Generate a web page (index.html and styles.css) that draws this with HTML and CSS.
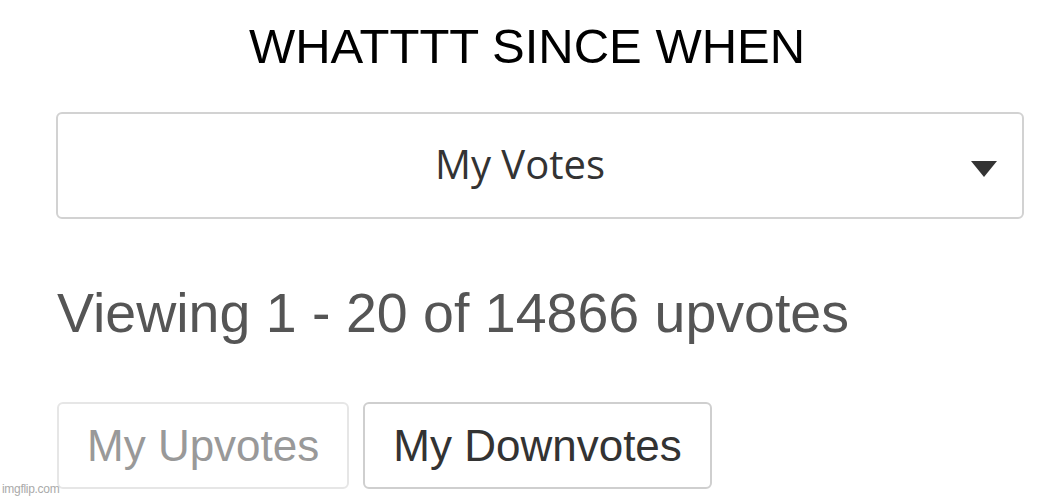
FILE: index.html
```html
<!DOCTYPE html>
<html>
<head>
<meta charset="utf-8">
<link rel="stylesheet" href="styles.css">
</head>
<body>
<div class="page">
  <h1 class="title">WHATTTT SINCE WHEN</h1>
  <div class="select">
    <span class="select-label">My Votes</span>
    <svg class="caret" width="26" height="16" viewBox="0 0 26 16"><polygon points="0,0 26,0 13,16" fill="#333"/></svg>
  </div>
  <p class="viewing">Viewing 1 - 20 of 14866 upvotes</p>
  <div class="tabs">
    <button class="tab tab-disabled">My Upvotes</button>
    <button class="tab">My Downvotes</button>
  </div>
  <span class="watermark">imgflip.com</span>
</div>
</body>
</html>
```

FILE: styles.css
```css
html, body {
  margin: 0;
  padding: 0;
  background: #fff;
}
.page {
  position: relative;
  width: 1054px;
  height: 499px;
  box-sizing: border-box;
  padding: 18px 30px 0 56px;
  display: flex;
  flex-direction: column;
  font-family: "Liberation Sans", Arial, sans-serif;
  overflow: hidden;
}
.title {
  margin: 0 0 0 -56px;
  width: 1054px;
  text-align: center;
  font-weight: normal;
  font-size: 49px;
  line-height: 56px;
  color: #000;
}
.select {
  margin-top: 38px;
  height: 107px;
  box-sizing: border-box;
  border: 2px solid #d2d2d2;
  border-radius: 6px;
  display: flex;
  align-items: center;
  justify-content: center;
  position: relative;
}
.select-label {
  font-family: "Open Sans", sans-serif;
  font-size: 40px;
  color: #333;
  margin-left: -40px;
  margin-top: -4px;
}
.caret {
  position: absolute;
  right: 25px;
  top: 47px;
}
.viewing {
  margin: 62px 0 0 1px;
  font-size: 55.5px;
  line-height: 64px;
  color: #555;
}
.tabs {
  margin-top: 57px;
  display: flex;
  gap: 14px;
  margin-left: 1px;
}
.tab {
  height: 87px;
  box-sizing: border-box;
  padding: 0 28px;
  border: 2px solid #cfcfcf;
  border-radius: 6px;
  background: #fff;
  font-family: "Liberation Sans", Arial, sans-serif;
  font-size: 44px;
  color: #333;
}
.tab-disabled {
  border-color: #e6e6e6;
  color: #999;
}
.watermark {
  position: absolute;
  left: 2px;
  top: 482px;
  font-size: 12px;
  color: #aaa;
  letter-spacing: -0.3px;
}
```
